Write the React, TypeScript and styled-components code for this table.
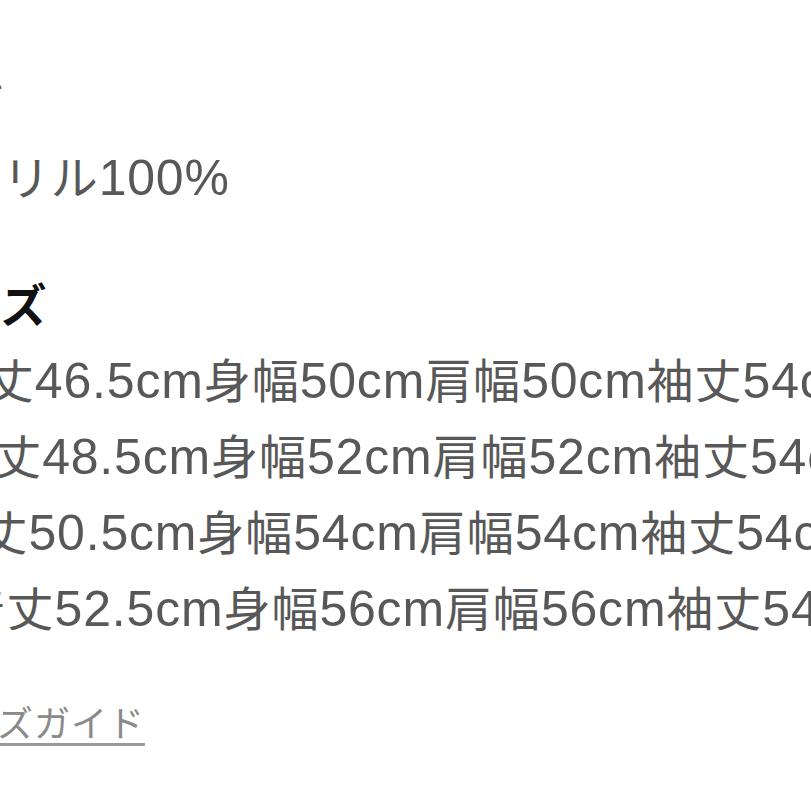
import styled, { createGlobalStyle } from 'styled-components'

const GlobalStyle = createGlobalStyle`
  html, body {
    margin: 0;
    padding: 0;
    background: #ffffff;
    overflow: hidden;
  }
  body {
    font-family: "Noto Sans CJK JP", "Noto Sans", sans-serif;
  }
`

const Page = styled.main`
  width: 811px;
  height: 811px;
  overflow: hidden;
  padding-top: 57px;
  box-sizing: border-box;
`

const Block = styled.section<{ gap: number }>`
  display: flex;
  flex-direction: column;
  margin-top: ${p => p.gap}px;
`

const Line = styled.p<{ shift: number }>`
  margin: 0 0 0 ${p => -p.shift}px;
  font-size: 47px;
  line-height: 76px;
  color: #585858;
  white-space: nowrap;
  letter-spacing: 1px;
`

const Heading = styled(Line)`
  font-size: 46px;
  color: #111111;
  font-weight: 700;
`

// latin runs (numbers, units) are set larger, as on the phone screenshot
const Num = styled.span`
  font-family: "Liberation Sans", Arial, sans-serif;
  font-size: 50px;
  line-height: 1;
  letter-spacing: 0.8px;
`

const GuideLink = styled.a<{ shift: number }>`
  display: inline-block;
  margin-left: ${p => -p.shift}px;
  font-size: 36px;
  line-height: 76px;
  color: #8a8a8a;
  white-space: nowrap;
  letter-spacing: 1px;
  text-decoration: underline;
  text-decoration-color: #999999;
  text-decoration-thickness: 3px;
  text-underline-offset: 6px;
`

const sizes = [
  { label: 'S', shift: 110, values: ['46.5', '50', '50', '54'] },
  { label: 'M', shift: 111, values: ['48.5', '52', '52', '54'] },
  { label: 'L', shift: 109, values: ['50.5', '54', '54', '54'] },
  { label: 'XL', shift: 117, values: ['52.5', '56', '56', '54'] },
]

export default function App() {
  return (
    <>
      <GlobalStyle />
      <Page>
        <Block gap={0}>
          <Line shift={92}>素材</Line>
        </Block>
        <Block gap={4}>
          <Line shift={91}>
            アクリル<Num>100%</Num>
          </Line>
        </Block>
        <Block gap={51}>
          <Heading shift={92}>サイズ</Heading>
        </Block>
        <Block gap={0}>
          {sizes.map(s => (
            <Line key={s.label} shift={s.shift}>
              <Num>{s.label} </Num>着丈<Num>{s.values[0]}cm</Num>身幅<Num>{s.values[1]}cm</Num>肩幅
              <Num>{s.values[2]}cm</Num>袖丈<Num>{s.values[3]}cm</Num>
            </Line>
          ))}
        </Block>
        <Block gap={39}>
          <div>
            <GuideLink href="#" shift={76}>サイズガイド</GuideLink>
          </div>
        </Block>
      </Page>
    </>
  )
}
